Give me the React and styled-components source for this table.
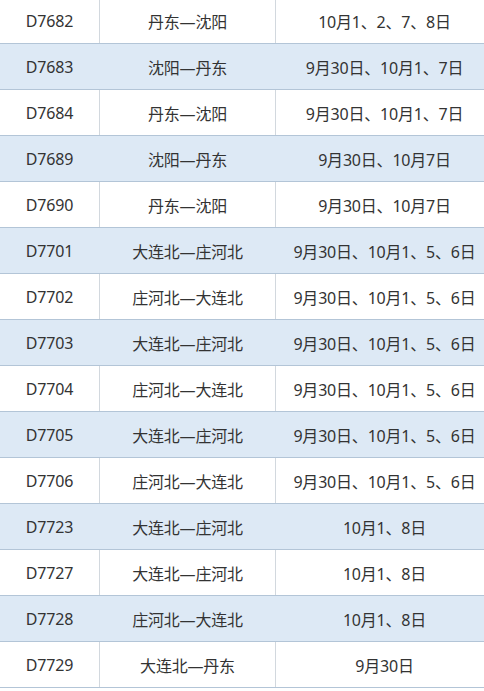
import React from "react";
import styled, { createGlobalStyle } from "styled-components";

const GlobalStyle = createGlobalStyle`
  html, body {
    margin: 0;
    padding: 0;
    background: #ffffff;
    overflow: hidden;
  }
  body {
    font-family: "Noto Sans", "Noto Sans CJK SC", sans-serif;
  }
`;

const Table = styled.div`
  width: 494px;
  margin-top: -2px;
  color: #333333;
  font-size: 16px;
`;

const Row = styled.div`
  display: grid;
  grid-template-columns: 100px 176px 218px;
  height: 46px;
  box-sizing: border-box;
  border-bottom: 1px solid #b3c5d7;
  background: ${(p) => (p.$striped ? "#dde9f5" : "#ffffff")};
`;

const Cell = styled.div`
  display: flex;
  align-items: center;
  justify-content: center;
  box-sizing: border-box;
  border-right: 1px solid ${(p) => (p.$striped ? "#dde9f5" : "#d2d8de")};
  white-space: nowrap;
  letter-spacing: -0.2px;
`;

const trains = [
  ["D7682", "丹东—沈阳", "10月1、2、7、8日"],
  ["D7683", "沈阳—丹东", "9月30日、10月1、7日"],
  ["D7684", "丹东—沈阳", "9月30日、10月1、7日"],
  ["D7689", "沈阳—丹东", "9月30日、10月7日"],
  ["D7690", "丹东—沈阳", "9月30日、10月7日"],
  ["D7701", "大连北—庄河北", "9月30日、10月1、5、6日"],
  ["D7702", "庄河北—大连北", "9月30日、10月1、5、6日"],
  ["D7703", "大连北—庄河北", "9月30日、10月1、5、6日"],
  ["D7704", "庄河北—大连北", "9月30日、10月1、5、6日"],
  ["D7705", "大连北—庄河北", "9月30日、10月1、5、6日"],
  ["D7706", "庄河北—大连北", "9月30日、10月1、5、6日"],
  ["D7723", "大连北—庄河北", "10月1、8日"],
  ["D7727", "大连北—庄河北", "10月1、8日"],
  ["D7728", "庄河北—大连北", "10月1、8日"],
  ["D7729", "大连北—丹东", "9月30日"],
];

export default function App() {
  return (
    <>
      <GlobalStyle />
      <Table>
        {trains.map(([code, route, dates], i) => {
          const striped = i % 2 === 1;
          return (
            <Row key={code} $striped={striped}>
              <Cell $striped={striped}>{code}</Cell>
              <Cell $striped={striped}>{route}</Cell>
              <Cell $striped={striped}>{dates}</Cell>
            </Row>
          );
        })}
      </Table>
    </>
  );
}
